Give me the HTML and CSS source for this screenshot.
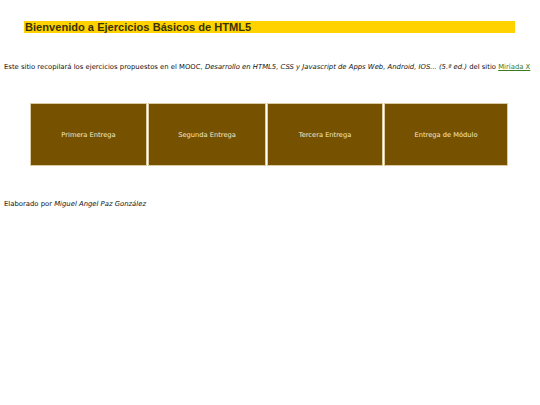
FILE: index.html
```html
<!DOCTYPE html>
<html lang="es">
<head>
<meta charset="utf-8">
<title>Ejercicios Básicos de HTML5</title>
<link rel="stylesheet" href="styles.css">
</head>
<body>
<header class="banner">
  <h1 class="title">Bienvenido a Ejercicios Básicos de HTML5</h1>
</header>
<p class="intro">Este sitio recopilará los ejercicios propuestos en el MOOC, <em>Desarrollo en HTML5, CSS y Javascript de Apps Web, Android, IOS... (5.ª ed.)</em> del sitio <a class="link" href="#">Miríada X</a></p>
<nav class="menu">
  <a class="cell c1" href="#">Primera Entrega</a>
  <a class="cell c2" href="#">Segunda Entrega</a>
  <a class="cell c3" href="#">Tercera Entrega</a>
  <a class="cell c4" href="#">Entrega de Módulo</a>
</nav>
<footer class="credits">Elaborado por <em>Miguel Angel Paz González</em></footer>
</body>
</html>
```
FILE: styles.css
```css
html, body {
  margin: 0;
  padding: 0;
  background: #ffffff;
}
body {
  padding: 21px 4px 0 4px;
  font-family: "DejaVu Sans", Verdana, sans-serif;
  font-size: 6.85px;
  color: #111;
}
.banner {
  margin: 0 21px 0 20px;
  background: #ffd200;
  height: 12px;
  display: flex;
  align-items: center;
}
.title {
  margin: 0 0 0 1px;
  font-family: "Liberation Sans", Arial, sans-serif;
  font-weight: bold;
  font-size: 11.1px;
  line-height: 12px;
  color: #3a3300;
}
.intro {
  margin: 30px 0 0 0;
  line-height: 9px;
  white-space: nowrap;
}
.link {
  color: #3d7a1e;
  text-decoration: underline;
}
.menu {
  margin: 31px 28px 0 26px;
  display: flex;
  gap: 1px;
  background: #ffffff;
}
.cell {
  display: flex;
  align-items: center;
  justify-content: center;
  height: 61px;
  background: #765200;
  border: 1px solid #dccba3;
  color: #f3e9cc;
  text-decoration: none;
  font-size: 6.7px;
}
.c1 { width: 115px; }
.c2 { width: 116px; }
.c3 { width: 114px; }
.c4 { width: 122px; }
.credits {
  margin-top: 34px;
  line-height: 9px;
}
```
